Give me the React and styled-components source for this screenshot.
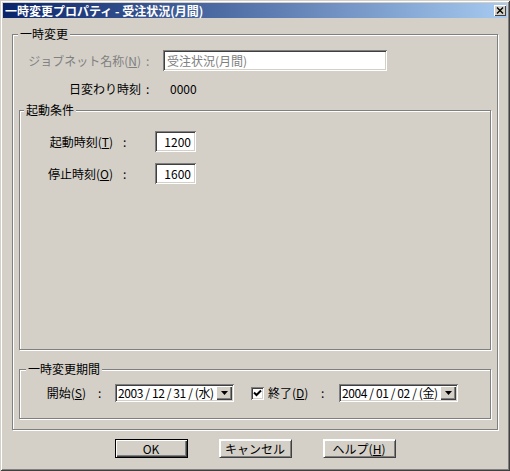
import React from "react";
import styled, { createGlobalStyle } from "styled-components";

const Global = createGlobalStyle`
  html, body { margin: 0; padding: 0; background: #d4d0c8; }
  body {
    font-family: "Noto Sans CJK JP", "Noto Sans", sans-serif;
    font-size: 12px;
    color: #000;
  }
`;

const Window = styled.div`
  box-sizing: border-box;
  width: 510px;
  height: 471px;
  padding: 3px;
  background: #d4d0c8;
  box-shadow: inset 1px 1px #d4d0c8, inset -1px -1px #404040,
    inset 2px 2px #ffffff, inset -2px -2px #808080;
  display: flex;
  flex-direction: column;
`;

const TitleBar = styled.div`
  height: 15px;
  display: flex;
  align-items: center;
  justify-content: space-between;
  padding-left: 2px;
  background: linear-gradient(to right, #0a246a, #a6caf0);
`;

const TitleText = styled.span`
  color: #fff;
  font-weight: bold;
  font-size: 12px;
  line-height: 15px;
  white-space: nowrap;
`;

const CloseButton = styled.div`
  box-sizing: border-box;
  width: 12px;
  height: 11px;
  margin-right: 1px;
  background: #d4d0c8;
  box-shadow: inset 1px 1px #fff, inset -1px -1px #404040;
  display: flex;
  align-items: center;
  justify-content: center;
`;

const Group = styled.div`
  position: relative;
  box-sizing: border-box;
  border: 1px solid #808080;
  box-shadow: inset 1px 1px #fff, 1px 1px #fff;
  height: ${(p) => p.$h}px;
  margin: ${(p) => p.$m};
  ${(p) => (p.$w ? `width: ${p.$w}px;` : "")}
  display: flex;
  flex-direction: column;
`;

const Legend = styled.span`
  position: absolute;
  top: -8px;
  left: ${(p) => p.$left}px;
  padding: 0 2px;
  background: #d4d0c8;
  line-height: 14px;
  white-space: nowrap;
`;

const Row = styled.div`
  display: flex;
  align-items: center;
  height: ${(p) => p.$h}px;
  margin-top: ${(p) => p.$mt}px;
`;

const Label = styled.span`
  width: ${(p) => p.$w}px;
  flex: none;
  text-align: ${(p) => (p.$left ? "left" : "right")};
  white-space: nowrap;
  color: ${(p) => (p.$muted ? "#808080" : "#000")};
  line-height: 14px;
`;

const Colon = styled.span`
  width: ${(p) => p.$w}px;
  flex: none;
  padding-left: ${(p) => p.$pl}px;
  box-sizing: border-box;
  color: ${(p) => (p.$muted ? "#808080" : "#000")};
  line-height: 14px;
`;

const Value = styled.span`
  padding-left: 7px;
  line-height: 14px;
`;

const TextBox = styled.div`
  box-sizing: border-box;
  width: ${(p) => p.$w}px;
  height: 21px;
  background: #fff;
  box-shadow: inset 1px 1px #808080, inset -1px -1px #fff,
    inset 2px 2px #404040, inset -2px -2px #d4d0c8;
  display: flex;
  align-items: center;
  justify-content: ${(p) => (p.$right ? "flex-end" : "flex-start")};
  padding: 0 5px 0 4px;
  color: ${(p) => (p.$muted ? "#808080" : "#000")};
  white-space: nowrap;
  overflow: hidden;
`;

const Combo = styled.div`
  box-sizing: border-box;
  width: 119px;
  height: 18px;
  flex: none;
  background: #fff;
  box-shadow: inset 1px 1px #808080, inset -1px -1px #fff,
    inset 2px 2px #404040, inset -2px -2px #d4d0c8;
  padding: 2px;
  display: flex;
  align-items: stretch;
`;

const ComboText = styled.span`
  flex: 1;
  min-width: 0;
  padding-left: 1px;
  line-height: 14px;
  white-space: pre;
  letter-spacing: -0.4px;
`;

const DropButton = styled.span`
  box-sizing: border-box;
  width: 16px;
  flex: none;
  background: #d4d0c8;
  box-shadow: inset 1px 1px #fff, inset -1px -1px #404040,
    inset -2px -2px #808080;
  display: flex;
  align-items: center;
  justify-content: center;
`;

const CheckBox = styled.span`
  box-sizing: border-box;
  width: 13px;
  height: 13px;
  flex: none;
  margin-left: ${(p) => p.$ml}px;
  background: #fff;
  box-shadow: inset 1px 1px #808080, inset -1px -1px #fff,
    inset 2px 2px #404040, inset -2px -2px #d4d0c8;
  display: flex;
  align-items: center;
  justify-content: center;
`;

const Gap = styled.span`
  width: ${(p) => p.$w}px;
  flex: none;
`;

const ButtonRow = styled.div`
  display: flex;
  justify-content: center;
  gap: 31px;
  margin-top: 9px;
`;

const Button = styled.div`
  box-sizing: border-box;
  width: 73px;
  height: 19px;
  background: #d4d0c8;
  border: 1px solid ${(p) => (p.$default ? "#000" : "transparent")};
  box-shadow: ${(p) =>
    p.$default
      ? "inset 1px 1px #fff, inset -1px -1px #404040, inset -2px -2px #808080"
      : "inset 1px 1px #fff, inset -1px -1px #808080"};
  ${(p) => (p.$default ? "" : "border-color: #fff #404040 #404040 #fff;")}
  display: flex;
  align-items: center;
  justify-content: center;
  line-height: 14px;
  white-space: nowrap;
`;

const Arrow = () => (
  <svg width="7" height="4" viewBox="0 0 7 4">
    <path d="M0 0H7L3.5 4Z" fill="#000" />
  </svg>
);

const Check = () => (
  <svg width="9" height="9" viewBox="0 0 9 9">
    <path d="M1 3.5L3.5 6L8 1.5" fill="none" stroke="#000" strokeWidth="2" />
  </svg>
);

const CloseX = () => (
  <svg width="8" height="7" viewBox="0 0 8 7">
    <path d="M1 0.5L7 6.5M7 0.5L1 6.5" stroke="#000" strokeWidth="1.4" />
  </svg>
);

export default function App() {
  return (
    <>
      <Global />
      <Window>
        <TitleBar>
          <TitleText>一時変更プロパティ - 受注状況(月間)</TitleText>
          <CloseButton>
            <CloseX />
          </CloseButton>
        </TitleBar>

        <Group $h={396} $w={486} $m="16px 0 0 9px">
          <Legend $left={5}>一時変更</Legend>

          <Row $h={21} $mt={15}>
            <Label $w={128} $muted>
              ジョブネット名称(<u>N</u>)
            </Label>
            <Colon $w={22} $pl={5} $muted>
              :
            </Colon>
            <TextBox $w={224} $muted>
              受注状況(月間)
            </TextBox>
          </Row>

          <Row $h={14} $mt={11}>
            <Label $w={128}>日変わり時刻</Label>
            <Colon $w={22} $pl={5}>
              :
            </Colon>
            <Value>0000</Value>
          </Row>

          <Group $h={240} $m="14px 6px 0 6px">
            <Legend $left={4}>起動条件</Legend>
            <Row $h={21} $mt={20}>
              <Label $w={93}>
                起動時刻(<u>T</u>)
              </Label>
              <Colon $w={42} $pl={10}>
                :
              </Colon>
              <TextBox $w={41} $right>
                1200
              </TextBox>
            </Row>
            <Row $h={21} $mt={11}>
              <Label $w={93}>
                停止時刻(<u>O</u>)
              </Label>
              <Colon $w={42} $pl={10}>
                :
              </Colon>
              <TextBox $w={41} $right>
                1600
              </TextBox>
            </Row>
          </Group>

          <Group $h={50} $m="19px 6px 0 6px">
            <Legend $left={6}>一時変更期間</Legend>
            <Row $h={18} $mt={14}>
              <Label $w={66}>
                開始(<u>S</u>)
              </Label>
              <Colon $w={29} $pl={12}>
                :
              </Colon>
              <Combo>
                <ComboText>2003 / 12 / 31 / (水)</ComboText>
                <DropButton>
                  <Arrow />
                </DropButton>
              </Combo>
              <CheckBox $ml={17}>
                <Check />
              </CheckBox>
              <Gap $w={4} />
              <Label $w={37} $left>
                終了(<u>D</u>)
              </Label>
              <Colon $w={34} $pl={16}>
                :
              </Colon>
              <Combo>
                <ComboText>2004 / 01 / 02 / (金)</ComboText>
                <DropButton>
                  <Arrow />
                </DropButton>
              </Combo>
            </Row>
          </Group>
        </Group>

        <ButtonRow>
          <Button $default>OK</Button>
          <Button>キャンセル</Button>
          <Button>
            ヘルプ(<u>H</u>)
          </Button>
        </ButtonRow>
      </Window>
    </>
  );
}
